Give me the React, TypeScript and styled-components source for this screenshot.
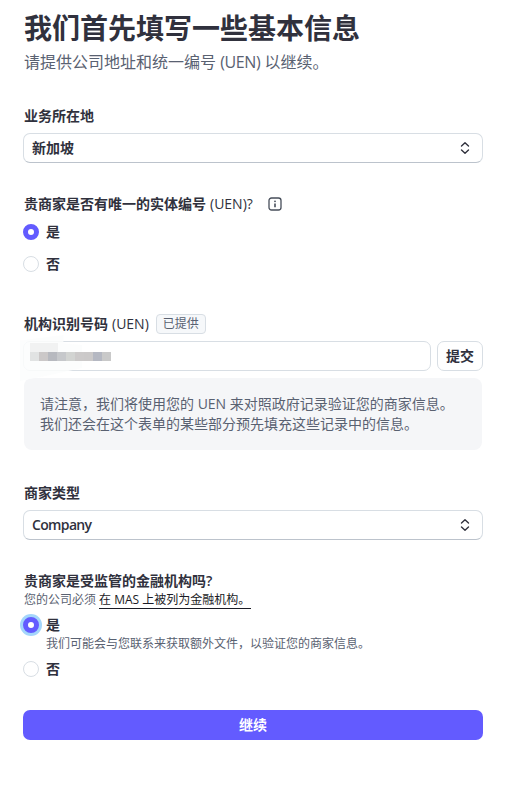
import React from "react";
import styled, { createGlobalStyle } from "styled-components";

const GlobalStyle = createGlobalStyle`
  html, body {
    margin: 0;
    padding: 0;
    background: #fff;
    font-family: "Open Sans", "Noto Sans CJK SC", sans-serif;
    color: #30313d;
  }
  * { box-sizing: border-box; }
`;

const Page = styled.div`
  width: 507px;
  height: 799px;
  overflow: hidden;
  padding: 10px 24px 0 23px;
  display: flex;
  flex-direction: column;
`;

const Title = styled.h1`
  margin: 0 0 0 1px;
  font-size: 28px;
  line-height: 36px;
  font-weight: 700;
  color: #30313d;
`;

const Subtitle = styled.p`
  margin: 4px 0 0 1px;
  font-size: 16px;
  line-height: 24px;
  color: #596171;
`;

const Tight = styled.span`
  letter-spacing: -0.4px;
`;

const Field = styled.section<{ $top: number }>`
  margin-top: ${p => p.$top}px;
  display: flex;
  flex-direction: column;
`;

const Label = styled.label`
  display: flex;
  align-items: center;
  height: 20px;
  margin-left: 1px;
  font-size: 14px;
  line-height: 20px;
  font-weight: 600;
  color: #30313d;
`;

const Plain = styled.span`
  font-weight: 500;
  margin-left: 4px;
`;

const Select = styled.div`
  height: 30px;
  margin-top: 7px;
  padding: 0 11px 0 8px;
  display: flex;
  align-items: center;
  justify-content: space-between;
  background: #fff;
  border: 1px solid #d8dee4;
  border-bottom-color: #bcc3cc;
  border-radius: 7px;
  font-size: 14px;
  color: #30313d;
`;

const SelectValue = styled.span<{ $latin?: boolean }>`
  margin-bottom: 2px;
  font-weight: 600;
  letter-spacing: ${p => (p.$latin ? "-0.65px" : "0")};
`;

const InfoIcon = styled.svg`
  margin-left: 15px;
`;

const RadioRow = styled.div<{ $top: number }>`
  margin-top: ${p => p.$top}px;
  display: flex;
  align-items: center;
  gap: 7px;
  height: 20px;
  font-size: 14px;
  font-weight: 600;
`;

const RadioText = styled.span`
  margin-bottom: 2px;
`;

const Radio = styled.span<{ $on?: boolean; $focus?: boolean }>`
  width: 16px;
  height: 16px;
  border-radius: 50%;
  flex: none;
  background: #fff;
  border: ${p => (p.$on ? "5px solid #635bff" : "1px solid #d8dee4")};
  box-shadow: ${p => (p.$focus ? "0 0 0 3px #a4d6fb" : "none")};
`;

const Badge = styled.span`
  margin-left: 7px;
  height: 20px;
  padding: 0 6px;
  display: inline-flex;
  align-items: center;
  border: 1px solid #d8dee4;
  border-radius: 4px;
  background: #f6f8fa;
  font-size: 12px;
  font-weight: 400;
  color: #596171;
`;

const InputRow = styled.div`
  margin-top: 7px;
  display: flex;
  gap: 6px;
`;

const Input = styled.div`
  flex: 1;
  height: 30px;
  border: 1px solid #d8dee4;
  border-radius: 7px;
  background: #fff;
  position: relative;
`;

// white smear left by the redaction, lies over the input's corner
const Smear = styled.div`
  position: absolute;
  left: -4px;
  top: -7px;
  width: 62px;
  height: 46px;
  background: rgba(252, 253, 253, 0.86);
  clip-path: polygon(0 12%, 70% 0, 70% 18%, 100% 22%, 100% 72%, 45% 88%, 0 100%);
`;

const FaintRow = styled.div`
  position: absolute;
  left: 6px;
  top: 1px;
  width: 28px;
  height: 9px;
  background: #f1f2f2;
`;

const Mosaic = styled.div`
  position: absolute;
  left: 6px;
  top: 10px;
  display: flex;
`;

const Cell = styled.span<{ $c: string }>`
  width: 9px;
  height: 9px;
  background: ${p => p.$c};
`;

const SubmitButton = styled.button`
  width: 46px;
  height: 30px;
  padding: 0 0 2px;
  border: 1px solid #d8dee4;
  border-radius: 7px;
  background: #fff;
  font-family: inherit;
  font-size: 14px;
  font-weight: 700;
  color: #30313d;
`;

const Note = styled.div`
  margin: 7px 1px 0 1px;
  height: 72px;
  padding: 16px 16px 0 16px;
  background: #f5f6f8;
  border-radius: 8px;
  font-size: 14px;
  line-height: 20px;
  color: #596171;
`;

const Help = styled.div`
  margin: 0 0 0 1px;
  height: 18px;
  font-size: 12px;
  line-height: 18px;
  color: #596171;
  white-space: nowrap;
`;

const HelpLink = styled.a`
  color: #1a1b25;
  margin-left: 3px;
  border-bottom: 1px solid #1a1b25;
  padding-right: 1px;
`;

const Description = styled.div`
  margin-left: 23px;
  font-size: 12px;
  line-height: 18px;
  height: 18px;
  color: #596171;
`;

const Primary = styled.button`
  margin-top: 31px;
  height: 30px;
  padding: 0 0 2px;
  border: none;
  border-radius: 7px;
  background: #635bff;
  color: #fff;
  font-family: inherit;
  font-size: 14px;
  font-weight: 700;
`;

const Chevrons = () => (
  <svg width="12" height="14" viewBox="0 0 12 14" fill="none" stroke="#30313d" strokeWidth="1.4" strokeLinecap="round" strokeLinejoin="round">
    <path d="M2.5 5L6 1.8 9.5 5" />
    <path d="M2.5 9L6 12.2 9.5 9" />
  </svg>
);

const mosaic = ["#e1e3e3", "#cbc8c8", "#b7b9bf", "#c6c8cb", "#d2d4d2", "#cccaca", "#cbc9c9", "#b5b8c2", "#c9c9c9"];

export default function App() {
  return (
    <Page>
      <GlobalStyle />
      <Title>我们首先填写一些基本信息</Title>
      <Subtitle>
        请提供公司地址和统一编号 <Tight>(UEN)</Tight> 以继续。
      </Subtitle>

      <Field $top={32}>
        <Label>业务所在地</Label>
        <Select>
          <SelectValue>新加坡</SelectValue>
          <Chevrons />
        </Select>
      </Field>

      <Field $top={31}>
        <Label>
          贵商家是否有唯一的实体编号<Plain>(UEN)?</Plain>
          <InfoIcon width="14" height="14" viewBox="0 0 14 14" fill="none">
            <rect x="1" y="1" width="12" height="12" rx="2.5" stroke="#474e5a" strokeWidth="1.3" />
            <circle cx="7" cy="4.3" r="0.9" fill="#474e5a" />
            <path d="M7 6.5V10.2" stroke="#474e5a" strokeWidth="1.6" />
          </InfoIcon>
        </Label>
        <RadioRow $top={8}>
          <Radio $on />
          <RadioText>是</RadioText>
        </RadioRow>
        <RadioRow $top={12}>
          <Radio />
          <RadioText>否</RadioText>
        </RadioRow>
      </Field>

      <Field $top={40}>
        <Label>
          机构识别号码<Plain>(UEN)</Plain>
          <Badge>已提供</Badge>
        </Label>
        <InputRow>
          <Input>
            <Smear />
            <FaintRow />
            <Mosaic>
              {mosaic.map((c, i) => (
                <Cell key={i} $c={c} />
              ))}
            </Mosaic>
          </Input>
          <SubmitButton>提交</SubmitButton>
        </InputRow>
        <Note>
          请注意，我们将使用您的 UEN 来对照政府记录验证您的商家信息。
          <br />
          我们还会在这个表单的某些部分预先填充这些记录中的信息。
        </Note>
      </Field>

      <Field $top={33}>
        <Label>商家类型</Label>
        <Select>
          <SelectValue $latin>Company</SelectValue>
          <Chevrons />
        </Select>
      </Field>

      <Field $top={31}>
        <Label>贵商家是受监管的金融机构吗?</Label>
        <Help>
          您的公司必须<HelpLink>在 MAS 上被列为金融机构。</HelpLink>
        </Help>
        <RadioRow $top={6}>
          <Radio $on $focus />
          <RadioText>是</RadioText>
        </RadioRow>
        <Description>我们可能会与您联系来获取额外文件，以验证您的商家信息。</Description>
        <RadioRow $top={6}>
          <Radio />
          <RadioText>否</RadioText>
        </RadioRow>
        <Primary>继续</Primary>
      </Field>
    </Page>
  );
}
